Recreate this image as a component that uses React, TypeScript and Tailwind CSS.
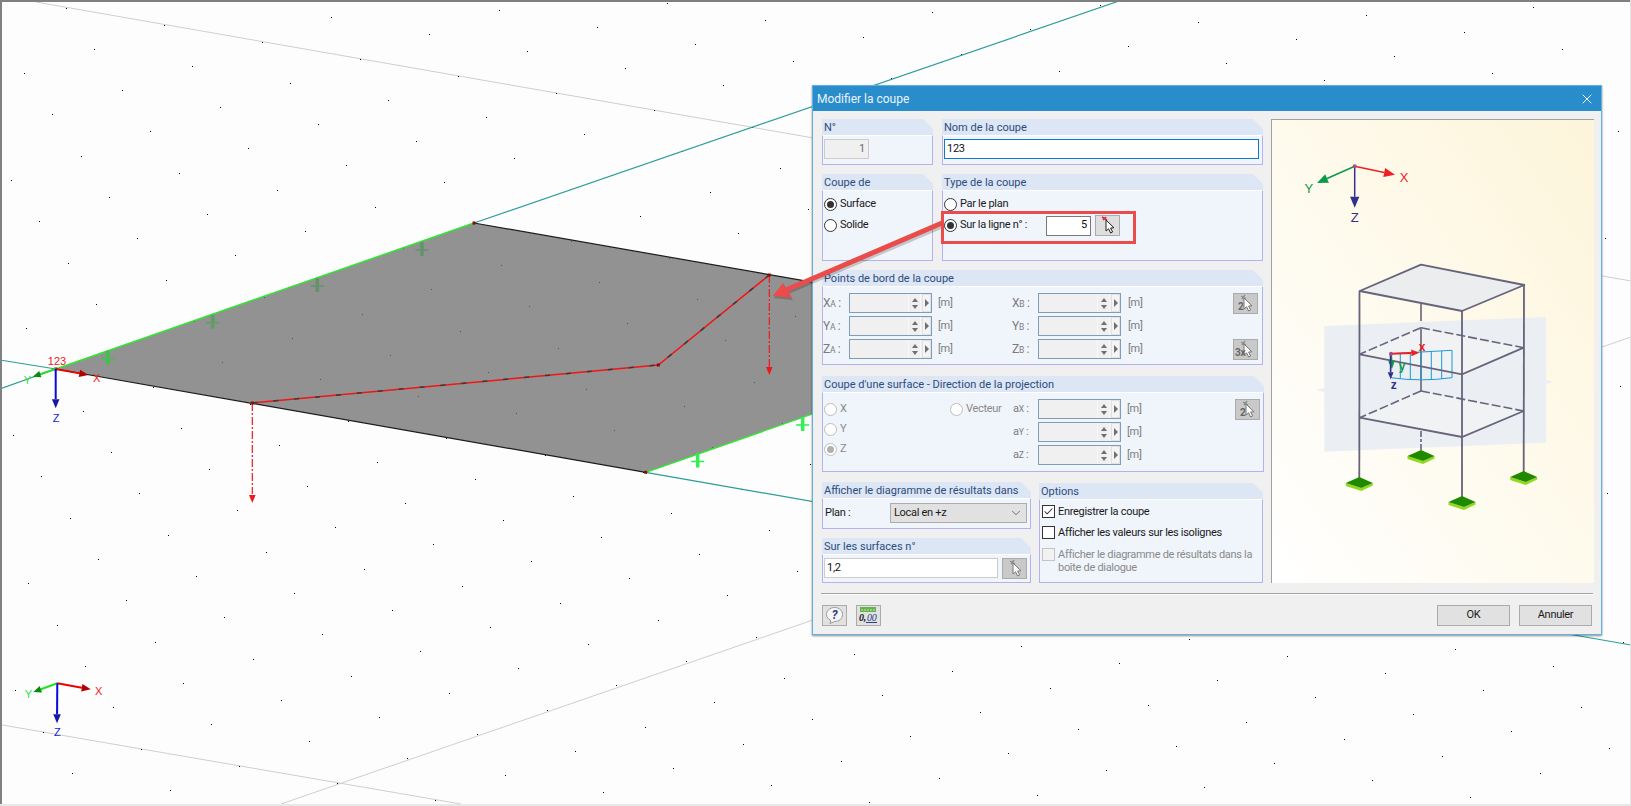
import { ReactNode } from 'react';
import { X, ChevronDown, Check } from 'lucide-react';

// grid dots of the 3D view: parallel projection, so a plain lattice
function gridDots() {
  const pts: { x: number; y: number }[] = [];
  for (let i = -30; i < 30; i++) {
    for (let j = -30; j < 30; j++) {
      const x = Math.round(39.3 + i * 98 + j * 69.7);
      const y = Math.round(221.3 + i * 17 - j * 24.3);
      if (x > 2 && x < 1629 && y > 2 && y < 803) pts.push({ x, y });
    }
  }
  return pts;
}

function Arrow({ x1, y1, x2, y2, line, head, w = 1.5, size = 8 }: { x1: number; y1: number; x2: number; y2: number; line: string; head: string; w?: number; size?: number }) {
  const len = Math.hypot(x2 - x1, y2 - y1);
  const ux = (x2 - x1) / len;
  const uy = (y2 - y1) / len;
  const bx = x2 - ux * size;
  const by = y2 - uy * size;
  const hw = size * 0.42;
  return (
    <g>
      <line x1={x1} y1={y1} x2={bx} y2={by} stroke={line} strokeWidth={w} />
      <polygon points={`${x2},${y2} ${bx - uy * hw},${by + ux * hw} ${bx + uy * hw},${by - ux * hw}`} fill={head} />
    </g>
  );
}

function Support({ x, y, color }: { x: number; y: number; color: string }) {
  return (
    <g stroke={color} fill="none">
      <line x1={x} y1={y - 7} x2={x} y2={y + 7} strokeWidth={3.5} />
      <line x1={x - 6.5} y1={y + 1} x2={x + 6.5} y2={y + 1} strokeWidth={1.6} />
    </g>
  );
}

function AxisLabel({ x, y, color, children }: { x: number; y: number; color: string; children: ReactNode }) {
  return (
    <text x={x} y={y} fill={color} fontSize={11} textAnchor="middle" dominantBaseline="central" fontFamily="'Liberation Sans', sans-serif">
      {children}
    </text>
  );
}

function Axes({ ox, oy, xt, yt, zt }: { ox: number; oy: number; xt: number[]; yt: number[]; zt: number[] }) {
  return (
    <g>
      <Arrow x1={ox} y1={oy} x2={xt[0]} y2={xt[1]} line="#f00000" head="#b00000" w={2} size={9} />
      <Arrow x1={ox} y1={oy} x2={yt[0]} y2={yt[1]} line="#22e022" head="#0a8a0a" w={2} size={8} />
      <Arrow x1={ox} y1={oy} x2={zt[0]} y2={zt[1]} line="#0808e0" head="#1818a8" w={2} size={9} />
    </g>
  );
}

function Scene() {
  const dots = gridDots();
  const plate = '55.7,369 474,223 1064,326 645.7,472.3';
  return (
    <svg className="absolute inset-0" width={1631} height={806} viewBox="0 0 1631 806">
      <defs>
        <clipPath id="plate-clip">
          <polygon points={plate} />
        </clipPath>
      </defs>
      <g stroke="#cfcfcf" strokeWidth={1}>
        <line x1={36} y1={2} x2={1631} y2={281} />
        <line x1={0} y1={724.6} x2={461} y2={804} />
        <line x1={281} y1={804} x2={1631} y2={337} />
      </g>
      {dots.map((d) => (
        <rect key={`${d.x}-${d.y}`} x={d.x} y={d.y} width={1} height={1} fill="#000" />
      ))}
      <g stroke="#2a9d9a" strokeWidth={1.2}>
        <line x1={0} y1={389} x2={55.7} y2={369} />
        <line x1={0} y1={360} x2={55.7} y2={369} />
        <line x1={474} y1={223} x2={1122} y2={0} />
        <line x1={645.7} y1={472.3} x2={1631} y2={645} />
      </g>
      <polygon points={plate} fill="#929292" />
      <g clipPath="url(#plate-clip)">
        {dots.map((d) => (
          <rect key={`p${d.x}-${d.y}`} x={d.x} y={d.y} width={1} height={1} fill="#555555" />
        ))}
      </g>
      <line x1={55.7} y1={369} x2={645.7} y2={472.3} stroke="#1c1c1c" strokeWidth={1.2} />
      <line x1={474} y1={223} x2={1064} y2={326} stroke="#1c1c1c" strokeWidth={1.2} />
      <line x1={55.7} y1={369} x2={474} y2={223} stroke="#2bea2b" strokeWidth={1.4} />
      <line x1={645.7} y1={472.3} x2={1064} y2={326} stroke="#2bea2b" strokeWidth={1.4} />

      <Support x={107.7} y={357.5} color="#3fc24a" />
      <Support x={212.7} y={321.7} color="#5f9d66" />
      <Support x={317.3} y={285} color="#64936b" />
      <Support x={422} y={249} color="#64936b" />
      <Support x={697.7} y={460.5} color="#34ee55" />
      <Support x={802.7} y={424} color="#34ee55" />

      <polyline points="252.3,403 658.3,365 769.3,275" fill="none" stroke="#f41414" strokeWidth={1.5} />
      <polyline points="252.3,403 658.3,365 769.3,275" fill="none" stroke="#3a3a3a" strokeWidth={1.5} strokeDasharray="5 16" />
      <g stroke="#f01818" strokeWidth={1.2} strokeDasharray="8 2 2 2">
        <line x1={252.3} y1={403} x2={252.3} y2={494} />
        <line x1={769.3} y1={275} x2={769.3} y2={367} />
      </g>
      <polygon points="249,495 255.6,495 252.3,503" fill="#f01818" />
      <polygon points="766,367 772.6,367 769.3,375" fill="#f01818" />

      {[[474, 223], [769.3, 275], [658.3, 365], [252.3, 403], [645.7, 472.3], [55.7, 369]].map(([x, y]) => (
        <rect key={x} x={x - 1.5} y={y - 1.5} width={3} height={3} fill="#8a0a0a" />
      ))}

      <Axes ox={55.7} oy={369} xt={[88.3, 375]} yt={[32.7, 376.7]} zt={[55.7, 408.3]} />
      <AxisLabel x={57} y={360.7} color="#f02020">123</AxisLabel>
      <AxisLabel x={96.7} y={377.7} color="#f02020">X</AxisLabel>
      <AxisLabel x={27.3} y={380} color="#30e040">Y</AxisLabel>
      <AxisLabel x={56} y={418.3} color="#1818d8">Z</AxisLabel>

      <Axes ox={57.3} oy={683.3} xt={[90.7, 689.3]} yt={[33.3, 692]} zt={[57, 723.3]} />
      <AxisLabel x={98.7} y={691.3} color="#f02020">X</AxisLabel>
      <AxisLabel x={28.3} y={694.3} color="#30e040">Y</AxisLabel>
      <AxisLabel x={57.3} y={732.3} color="#1818d8">Z</AxisLabel>

      <rect x={0} y={0} width={1631} height={2} fill="#808080" />
      <rect x={0} y={0} width={2} height={806} fill="#808080" />
      <rect x={1630} y={0} width={1} height={806} fill="#e4e4e4" />
      <rect x={0} y={804} width={1631} height={2} fill="#e8e8e8" />
    </svg>
  );
}

function Group({ title, className, bodyClass, children }: { title: string; className: string; bodyClass?: string; children?: ReactNode }) {
  return (
    <div className={`flex flex-col ${className}`}>
      <div className="h-4 shrink-0 whitespace-nowrap bg-[#dce6f5] pl-[2px] text-[11px] leading-[17px] tracking-normal text-[#2c4c7c] [clip-path:polygon(0_0,calc(100%-10px)_0,100%_10px,100%_100%,0_100%)]">
        {title}
      </div>
      <div className={`flex-1 border-x border-b border-t border-[#b2b2ee] border-t-white bg-[#f0f4fb] ${bodyClass ?? ''}`}>{children}</div>
    </div>
  );
}

function Radio({ checked, disabled, label }: { checked?: boolean; disabled?: boolean; label?: string }) {
  return (
    <div className={`flex items-center gap-[3px] ${disabled ? 'text-[#8a8a8a]' : 'text-[#1a1a1a]'}`}>
      <span className={`flex size-[13px] items-center justify-center rounded-full border bg-white ${disabled ? 'border-[#bdbdbd]' : 'border-[#333333]'}`}>
        {checked && <span className={`size-[7px] rounded-full ${disabled ? 'bg-[#b0b0b0]' : 'bg-[#333333]'}`} />}
      </span>
      {label}
    </div>
  );
}

function CheckRow({ checked, disabled, children }: { checked?: boolean; disabled?: boolean; children: ReactNode }) {
  return (
    <div className={`flex items-start gap-[3px] pl-[1px] leading-[13px] ${disabled ? 'text-[#8a8a8a]' : 'text-[#1a1a1a]'}`}>
      <span className={`flex size-[13px] shrink-0 items-center justify-center border ${disabled ? 'border-[#c4c4c4] bg-[#f2f2f2]' : 'border-[#333333] bg-white'}`}>
        {checked && <Check size={11} strokeWidth={2.2} className="text-[#333333]" />}
      </span>
      <span>{children}</span>
    </div>
  );
}

function Cursor({ mark, dim }: { mark?: string; dim?: boolean }) {
  return (
    <svg width={23} height={19} viewBox="0 0 23 19">
      {!mark && !dim && <path d="M6 1 L11 4 M10 1 L7 4" stroke="#d8283c" strokeWidth={1.6} />}
      {(mark || dim) && <path d="M7 2 L12 5 M11 1 L8 5" stroke="#8c8c8c" strokeWidth={1.4} />}
      <path
        d="M10 4 L10 15 L12.6 12.8 L14.6 17 L16.6 16 L14.6 12 L18 11.8 Z"
        fill="#ffffff"
        stroke={dim || mark ? '#777777' : '#222222'}
        strokeWidth={1}
      />
      {mark && (
        <text x={mark === '2' ? 4 : 1} y={16} fontSize={10} fontWeight={700} fill="#666666">
          {mark}
        </text>
      )}
    </svg>
  );
}

function PickButton({ mark, dim }: { mark?: string; dim?: boolean }) {
  return (
    <div className={`flex h-[21px] w-[25px] shrink-0 items-center justify-center border border-[#ababab] ${dim ? 'bg-[#c9c9c9]' : 'bg-[#dedede]'}`}>
      <Cursor mark={mark} dim={dim} />
    </div>
  );
}

function SpinField() {
  return (
    <div className="flex h-5 w-[83px] shrink-0 items-stretch border border-[#7f9db9] bg-[#f0f0f0]">
      <div className="flex-1" />
      <div className="flex w-[13px] flex-col items-center justify-center gap-[3px] border-x border-[#f8f8f8] bg-[#f0f0f0]">
        <span className="h-0 w-0 border-x-[3.5px] border-b-[4px] border-x-transparent border-b-[#707070]" />
        <span className="h-0 w-0 border-x-[3.5px] border-t-[4px] border-x-transparent border-t-[#707070]" />
      </div>
      <div className="ml-px flex w-[9px] items-center justify-center border border-[#e2e2e2] bg-[#f4f4f4]">
        <span className="h-0 w-0 border-y-[4px] border-l-[4px] border-y-transparent border-l-[#707070]" />
      </div>
    </div>
  );
}

function AxisName({ a, b, width = 26 }: { a: string; b: string; width?: number }) {
  return (
    <span className="shrink-0 text-[12px] text-[#7c7c7c]" style={{ width }}>
      {a}
      <span className="text-[8.5px]">{b}</span> :
    </span>
  );
}

function PointRow({ n, mark }: { n: string; mark?: string }) {
  return (
    <div className="flex h-5 items-center pr-[4px]">
      <AxisName a={n} b="A" />
      <SpinField />
      <span className="w-[80px] shrink-0 pl-[6px] text-[#7c7c7c]">[m]</span>
      <AxisName a={n} b="B" />
      <SpinField />
      <span className="shrink-0 pl-[7px] text-[#7c7c7c]">[m]</span>
      {mark && (
        <div className="ml-auto">
          <PickButton mark={mark} dim />
        </div>
      )}
    </div>
  );
}

function VectorRow({ n }: { n: string }) {
  return (
    <div className="flex h-5 items-center">
      <span className="w-[25px] shrink-0 text-[#7c7c7c]">
        a<span className="text-[8.5px]">{n}</span> :
      </span>
      <SpinField />
      <span className="shrink-0 pl-[6px] text-[#7c7c7c]">[m]</span>
    </div>
  );
}

function Foot({ x, y }: { x: number; y: number }) {
  return (
    <g>
      <polygon points={`${x - 13.5},${y + 1} ${x + 2},${y + 6} ${x + 13.5},${y + 1} ${x + 13.5},${y + 3.5} ${x + 2},${y + 9} ${x - 13.5},${y + 4}`} fill="#93d81c" />
      <polygon points={`${x - 13.5},${y + 1} ${x},${y - 5} ${x + 13.5},${y + 1} ${x + 2},${y + 6}`} fill="#1f8a00" />
    </g>
  );
}

function Illustration() {
  const frame = '#66637b';
  return (
    <svg className="absolute inset-0" width={323} height={464} viewBox="1271 119 323 464" fontFamily="'Liberation Sans', sans-serif">
      <Arrow x1={1353.7} y1={165.3} x2={1394} y2={173.7} line="#ed2024" head="#ed2024" size={11} />
      <Arrow x1={1353.7} y1={165.3} x2={1316} y2={182} line="#0b9b48" head="#0b9b48" size={11} />
      <Arrow x1={1353.7} y1={165.3} x2={1353.7} y2={206.7} line="#33308c" head="#33308c" size={11} />
      <circle cx={1353.7} cy={165.3} r={2} fill="#b0478e" />
      <g fontSize={13} textAnchor="middle" dominantBaseline="central">
        <text x={1403} y={176.7} fill="#ed2024">X</text>
        <text x={1307.7} y={187.7} fill="#0b9b48">Y</text>
        <text x={1353.7} y={216.7} fill="#33308c">Z</text>
      </g>

      <polygon points="1323.3,325 1545,316 1545,379 1553,381 1545,383 1545,441.7 1323.3,450.7 1323.3,391 1315,389 1323.3,387" fill="#ebeff3" />

      <polygon points="1420,326.7 1522.7,346.7 1461,373.3 1358.7,353.3" fill="#f1f2f3" />
      <polygon points="1420,390 1522.7,410 1461,436 1358.7,416.7" fill="#f1f2f3" />

      <g stroke={frame} strokeWidth={1.6} fill="none">
        <line x1={1420} y1={303} x2={1420} y2={320} />
        <line x1={1420} y1={328} x2={1420} y2={390} />
        <line x1={1420} y1={430} x2={1420} y2={453} strokeDasharray="6 2 3 2" />
        <polyline points="1420,326.7 1522.7,346.7" strokeDasharray="9 3" />
        <polyline points="1420,326.7 1358.7,353.3" strokeDasharray="9 3" />
        <polyline points="1420,390 1522.7,410" strokeDasharray="9 3" />
        <polyline points="1420,390 1358.7,416.7" strokeDasharray="9 3" />
      </g>

      <g stroke="#1a9ad6" strokeWidth={1} fill="none">
        <path d="M1390 352.7 L1451 349.3 L1451 376.7 Q1420 381 1390 376.7" />
        <line x1={1399.3} y1={352} x2={1399.3} y2={377.5} />
        <line x1={1409.3} y1={351.5} x2={1409.3} y2={378.5} />
        <line x1={1420} y1={351} x2={1420} y2={379} />
        <line x1={1430.3} y1={350.5} x2={1430.3} y2={378.5} />
        <line x1={1440.7} y1={350} x2={1440.7} y2={378} />
      </g>

      <polygon points="1420,263.7 1523.3,284 1461,310 1358.7,290" fill="#ecedee" stroke={frame} strokeWidth={1.8} strokeLinejoin="round" />
      <g stroke={frame} strokeWidth={1.8} fill="none">
        <line x1={1358.5} y1={290} x2={1358.3} y2={478} />
        <line x1={1461} y1={310} x2={1461} y2={498} />
        <line x1={1523} y1={284} x2={1522.7} y2={472} />
        <polyline points="1358.7,353.3 1461,373.3 1522.7,346.7" />
        <polyline points="1358.7,416.7 1461,436 1522.7,410" />
      </g>

      <Foot x={1420} y={454} />
      <Foot x={1358.3} y={481} />
      <Foot x={1461} y={500} />
      <Foot x={1522.7} y={475} />

      <Arrow x1={1390} y1={352.7} x2={1418.3} y2={351.7} line="#ed2024" head="#ed2024" w={2} size={8} />
      <Arrow x1={1390} y1={352.7} x2={1391} y2={368} line="#0b9b48" head="#0b9b48" w={2} size={8} />
      <Arrow x1={1389.5} y1={352.7} x2={1389.7} y2={378.3} line="#33308c" head="#33308c" w={1.6} size={7} />
      <circle cx={1390} cy={352.7} r={2} fill="#b0478e" />
      <g fontSize={12} fontWeight={700} textAnchor="middle" dominantBaseline="central">
        <text x={1421} y={345.7} fill="#ed2024">x</text>
        <text x={1401} y={365} fill="#0b9b48">y</text>
        <text x={1392.7} y={384} fill="#33308c">z</text>
      </g>
    </svg>
  );
}

function Callout() {
  return (
    <svg className="pointer-events-none absolute inset-0" width={1631} height={806} viewBox="0 0 1631 806">
      <g fill="#000" opacity={0.18} transform="translate(1 2)">
        <line x1={941} y1={224} x2={786} y2={290} stroke="#000" strokeWidth={5} />
        <polygon points="772.7,296 783,283 792,298" />
      </g>
      <line x1={942} y1={223} x2={786} y2={290} stroke="#e94c4a" strokeWidth={5} />
      <polygon points="772.7,296 783,283 792,298" fill="#e94c4a" />
      <rect x={942.5} y={212.5} width={192} height={30} fill="none" stroke="#e94c4a" strokeWidth={3} />
    </svg>
  );
}

function HelpIcon() {
  return (
    <svg width={21} height={19} viewBox="0 0 21 19">
      <path d="M10.5 1.5 C16 1.5 18.5 5 18.5 8.5 C18.5 13 15 15.5 10.5 15.5 L6 17.5 L6.8 14.5 C4 13 2.5 11 2.5 8.5 C2.5 5 5.5 1.5 10.5 1.5 Z" fill="#f6f6f6" stroke="#9a9a9a" />
      <text x={10.5} y={13} fontSize={12} fontWeight={700} fontStyle="italic" fill="#2c3f86" textAnchor="middle">?</text>
    </svg>
  );
}

function DecimalIcon() {
  return (
    <svg width={21} height={19} viewBox="0 0 21 19">
      <rect x={2} y={1} width={16} height={5} fill="#66b34d" />
      <path d="M4 3 V5 M7 3 V5 M10 3 V5 M13 3 V5 M16 3 V5" stroke="#d8ecd0" strokeWidth={0.8} />
      <text x={1} y={15} fontSize={10} fontWeight={700} fontStyle="italic" fill="#222222" fontFamily="'Liberation Serif', serif">0,</text>
      <text x={9} y={15} fontSize={10} fontStyle="italic" fill="#2c3f86" fontFamily="'Liberation Serif', serif">00</text>
      <line x1={8} y1={16.5} x2={19} y2={16.5} stroke="#2c3f86" />
    </svg>
  );
}

function FooterButton({ label }: { label: string }) {
  return (
    <div className="flex h-[21px] w-[73px] items-center justify-center border border-[#ababab] bg-[#e1e1e1] text-[#1a1a1a]">
      {label}
    </div>
  );
}

function Dialog() {
  return (
    <div className="absolute left-[812px] top-[85px] flex h-[550px] w-[790px] flex-col border border-[#63b0e4] bg-[#f0f0f0] tracking-[-0.3px] shadow-[0_1px_2px_rgba(0,0,0,0.45)]">
      <div className="flex h-[25px] shrink-0 items-center justify-between bg-[#2a8dcb] pl-1 pr-[6px] text-[12px] tracking-normal text-white">
        <span className="text-[#eaf4fb]">Modifier la coupe</span>
        <X size={16} strokeWidth={1.5} />
      </div>
      <div className="flex gap-[7px] pl-[9px] pt-2">
        <div className="flex w-[442px] flex-col">
          <div className="flex gap-[9px]">
            <Group title="N°" className="h-[46px] w-[111px]" bodyClass="pl-[1px] pt-[3px]">
              <div className="flex h-5 w-[45px] items-center justify-end border border-[#cccccc] bg-[#f0f0f0] pr-[3px] text-[#6d6d6d]">1</div>
            </Group>
            <Group title="Nom de la coupe" className="h-[46px] w-[321px]" bodyClass="pl-[1px] pt-[3px]">
              <div className="flex h-5 w-[315px] items-center border border-[#0f78d0] bg-white pl-[2px] text-[#111111]">123</div>
            </Group>
          </div>
          <div className="mt-[9px] flex gap-[9px]">
            <Group title="Coupe de" className="h-[87px] w-[111px]" bodyClass="pl-[1px] pt-[3px]">
              <div className="flex h-[21px] items-center"><Radio checked label="Surface" /></div>
              <div className="flex h-[21px] items-center"><Radio label="Solide" /></div>
            </Group>
            <Group title="Type de la coupe" className="h-[87px] w-[321px]" bodyClass="pl-[1px] pt-[3px]">
              <div className="flex h-[21px] items-center"><Radio label="Par le plan" /></div>
              <div className="flex h-[21px] items-center">
                <div className="w-[102px]"><Radio checked label="Sur la ligne n° :" /></div>
                <div className="flex h-5 w-[45px] items-center justify-end border border-[#7a7a7a] bg-white pr-[3px] text-[#111111]">5</div>
                <div className="ml-[4px]"><PickButton /></div>
              </div>
            </Group>
          </div>
          <Group title="Points de bord de la coupe" className="mt-[9px] h-[95px] w-[441px]" bodyClass="flex flex-col gap-[3px] pt-[6px]">
            <PointRow n="X" mark="2" />
            <PointRow n="Y" />
            <PointRow n="Z" mark="3x" />
          </Group>
          <Group title="Coupe d'une surface - Direction de la projection" className="mt-[11px] h-[96px] w-[442px]" bodyClass="flex pl-[1px] pt-[6px] pr-[3px]">
            <div className="flex w-[126px] flex-col">
              <div className="flex h-5 items-center"><Radio disabled label="X" /></div>
              <div className="flex h-5 items-center"><Radio disabled label="Y" /></div>
              <div className="flex h-5 items-center"><Radio disabled checked label="Z" /></div>
            </div>
            <div className="flex h-5 w-[63px] items-center"><Radio disabled label="Vecteur" /></div>
            <div className="flex flex-col gap-[3px]">
              <VectorRow n="X" />
              <VectorRow n="Y" />
              <VectorRow n="Z" />
            </div>
            <div className="ml-auto"><PickButton mark="2" dim /></div>
          </Group>
          <div className="mt-[10px] flex gap-2">
            <div className="flex w-[209px] flex-col gap-[9px]">
              <Group title="Afficher le diagramme de résultats dans" className="h-[47px]" bodyClass="flex items-start pt-[4px]">
                <span className="w-[67px] pl-[2px] leading-5 text-[#1a1a1a]">Plan :</span>
                <div className="flex h-5 w-[137px] items-center justify-between border border-[#adadad] bg-[#e1e1e1] pl-[3px] pr-[3px] text-[#1a1a1a]">
                  Local en +z
                  <ChevronDown size={14} strokeWidth={1.2} className="text-[#444444]" />
                </div>
              </Group>
              <Group title="Sur les surfaces n°" className="h-[45px]" bodyClass="flex items-start gap-[4px] pl-[1px] pt-[3px]">
                <div className="flex h-5 w-[174px] items-center border border-[#cccccc] bg-white pl-[2px] text-[#111111]">1,2</div>
                <PickButton dim />
              </Group>
            </div>
            <Group title="Options" className="mt-px h-[100px] w-[224px]" bodyClass="flex flex-col pl-px pt-[5px]">
              <CheckRow checked>Enregistrer la coupe</CheckRow>
              <div className="mt-2"><CheckRow>Afficher les valeurs sur les isolignes</CheckRow></div>
              <div className="mt-[9px]"><CheckRow disabled>Afficher le diagramme de résultats dans la boîte de dialogue</CheckRow></div>
            </Group>
          </div>
        </div>
        <div className="relative h-[464px] w-[323px] border-l border-t border-[#a0a0a0] bg-gradient-to-tr from-white to-[#fdf5da]">
          <Illustration />
        </div>
      </div>
      <div className="ml-2 mt-[10px] w-[772px] border-y border-y-[#a3a3a3] border-b-white" />
      <div className="mt-[10px] flex items-center pl-[9px]">
        <div className="flex h-[21px] w-[25px] items-center justify-center border border-[#ababab] bg-[#e1e1e1]"><HelpIcon /></div>
        <div className="ml-[9px] flex h-[21px] w-[25px] items-center justify-center border border-[#ababab] bg-[#e1e1e1]"><DecimalIcon /></div>
        <div className="ml-auto flex gap-[9px] pr-[9px]">
          <FooterButton label="OK" />
          <FooterButton label="Annuler" />
        </div>
      </div>
    </div>
  );
}

export default function App() {
  return (
    <div className="relative h-[806px] w-[1631px] overflow-hidden bg-[#fdfdfd] font-['Roboto',sans-serif] text-[11px]">
      <Scene />
      <Dialog />
      <Callout />
    </div>
  );
}
